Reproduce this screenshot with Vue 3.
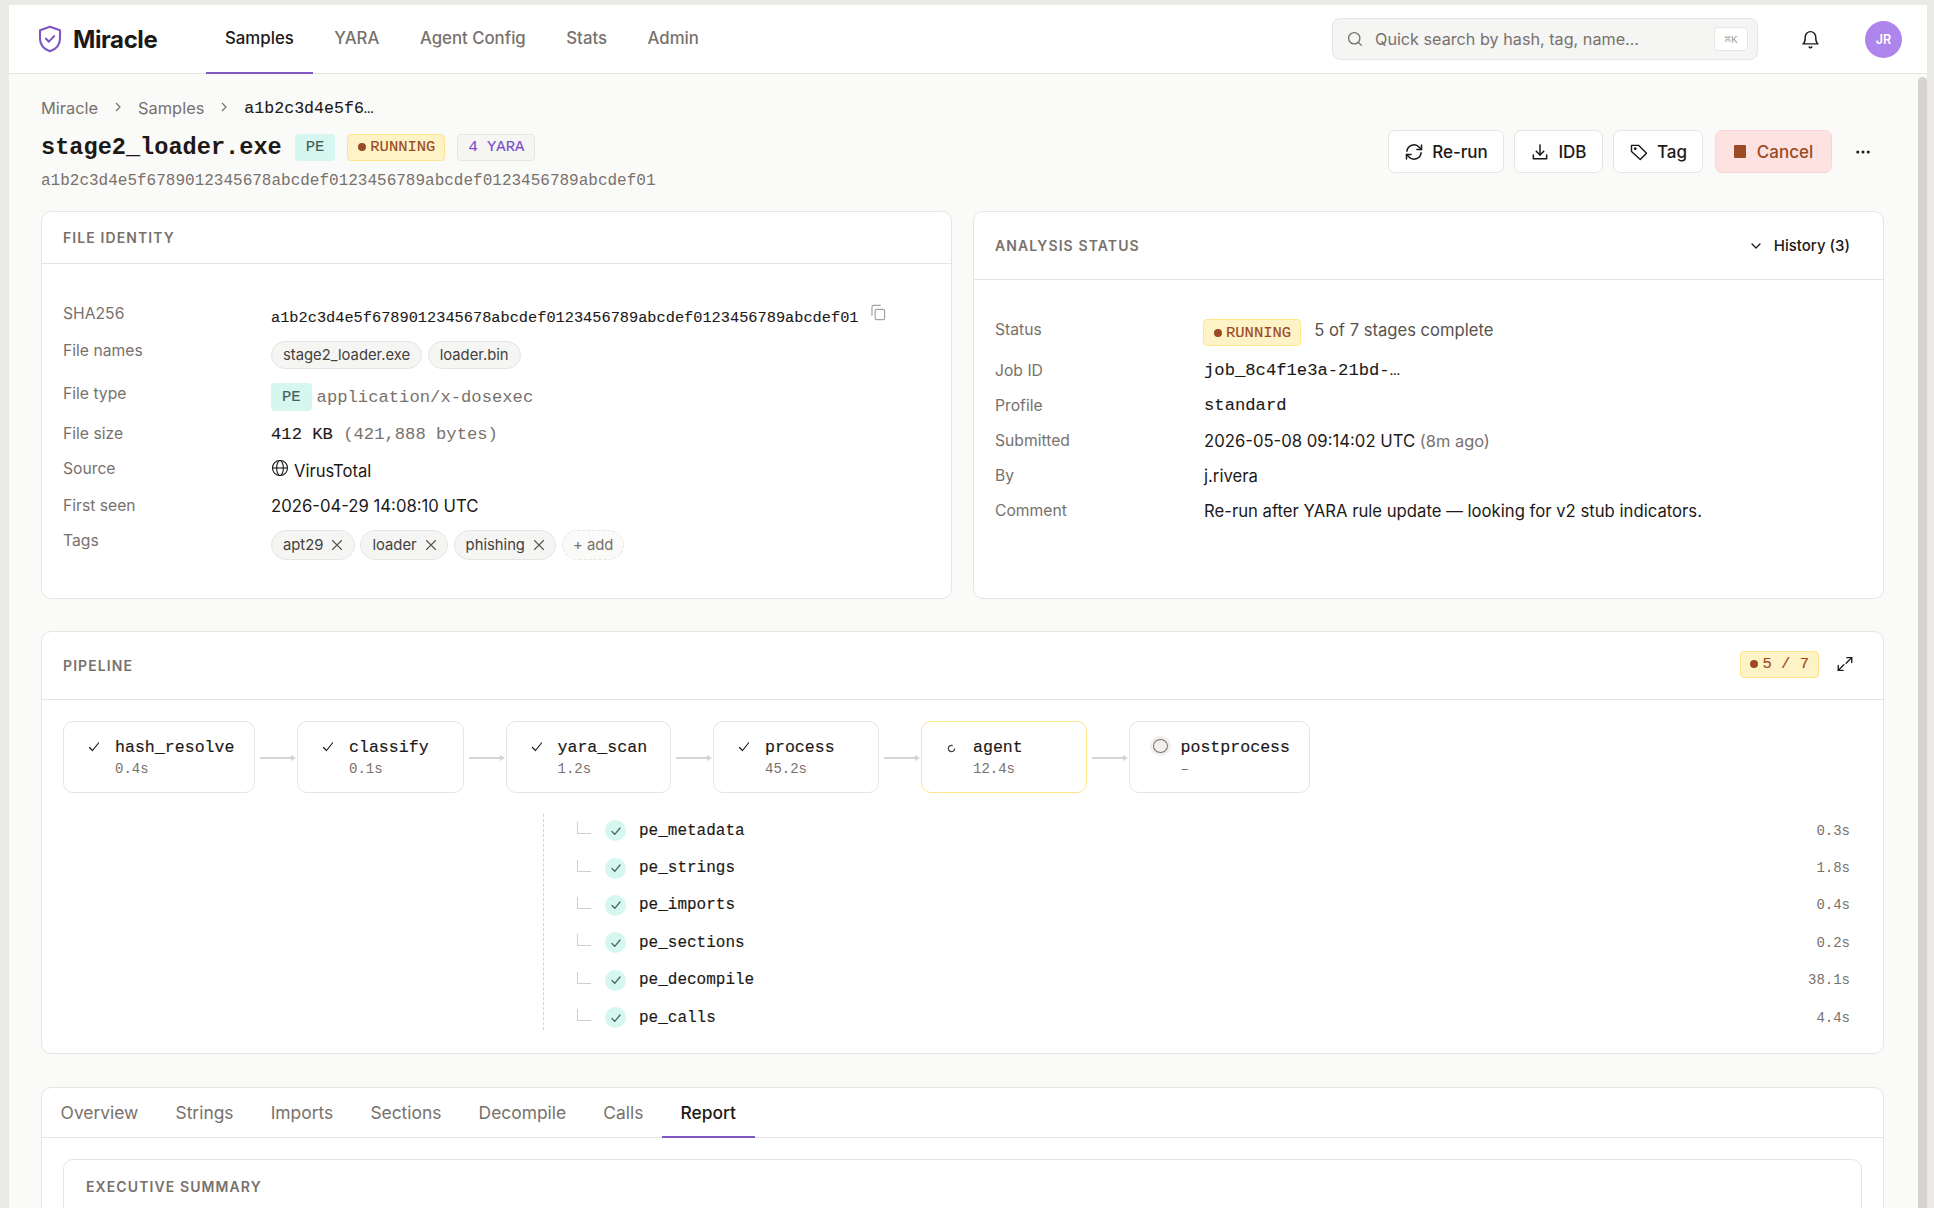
<script setup>
const navItems = ['Samples', 'YARA', 'Agent Config', 'Stats', 'Admin'];
const stages = [
  { name: 'hash_resolve', time: '0.4s', state: 'done', width: '192px' },
  { name: 'classify', time: '0.1s', state: 'done', width: '166.500px' },
  { name: 'yara_scan', time: '1.2s', state: 'done', width: '165.500px' },
  { name: 'process', time: '45.2s', state: 'done', width: '166px' },
  { name: 'agent', time: '12.4s', state: 'running', width: '166px' },
  { name: 'postprocess', time: '–', state: 'pending', width: '181px' },
];
const subStages = [
  { name: 'pe_metadata', time: '0.3s' },
  { name: 'pe_strings', time: '1.8s' },
  { name: 'pe_imports', time: '0.4s' },
  { name: 'pe_sections', time: '0.2s' },
  { name: 'pe_decompile', time: '38.1s' },
  { name: 'pe_calls', time: '4.4s' },
];
const tags = ['apt29', 'loader', 'phishing'];
const tabs = ['Overview', 'Strings', 'Imports', 'Sections', 'Decompile', 'Calls', 'Report'];
</script>

<template>
  <div class="window">
    <header class="topbar">
      <div class="brand">
        <svg class="brand-icon" viewBox="0 0 24 24" fill="none" stroke="#7e57c2" stroke-width="1.700" stroke-linecap="round" stroke-linejoin="round">
          <path d="M12 2.2 4 5v6.500c0 5 3.400 8.600 8 10.300 4.600-1.700 8-5.300 8-10.300V5z" />
          <path d="m8.800 11.800 2.300 2.300 4.200-4.400" />
        </svg>
        <span class="brand-name">Miracle</span>
      </div>
      <nav class="nav">
        <a v-for="item in navItems" :key="item" class="nav-item" :class="{ active: item === 'Samples' }">{{ item }}</a>
      </nav>
      <div class="search">
        <svg class="search-icon" viewBox="0 0 24 24" fill="none" stroke="#78716c" stroke-width="1.800" stroke-linecap="round">
          <circle cx="11" cy="11" r="7.500" />
          <path d="m20.500 20.500-4.200-4.200" />
        </svg>
        <span class="search-text">Quick search by hash, tag, name…</span>
        <kbd class="search-kbd">⌘K</kbd>
      </div>
      <svg class="bell" viewBox="0 0 24 24" fill="none" stroke="#1c1917" stroke-width="1.700" stroke-linecap="round" stroke-linejoin="round">
        <path d="M6 9a6 6 0 0 1 12 0c0 6 2.500 8 2.500 8h-17S6 15 6 9" />
        <path d="M10.500 20.500a1.700 1.700 0 0 0 3 0" />
      </svg>
      <div class="avatar">JR</div>
    </header>

    <div class="scroll-area">
      <main class="page">
        <div class="crumbs">
          <span>Miracle</span>
          <svg class="crumb-sep" viewBox="0 0 12 12" fill="none" stroke="#78716c" stroke-width="1.200"><path d="m4 2 4 4-4 4" /></svg>
          <span>Samples</span>
          <svg class="crumb-sep" viewBox="0 0 12 12" fill="none" stroke="#78716c" stroke-width="1.200"><path d="m4 2 4 4-4 4" /></svg>
          <span class="crumb-current">a1b2c3d4e5f6…</span>
        </div>

        <div class="title-row">
          <div class="title-left">
            <div class="title-line">
              <h1 class="title">stage2_loader.exe</h1>
              <span class="badge badge-pe">PE</span>
              <span class="badge badge-running"><i class="dot"></i>RUNNING</span>
              <span class="badge badge-yara">4 YARA</span>
            </div>
            <div class="title-hash">a1b2c3d4e5f6789012345678abcdef0123456789abcdef0123456789abcdef01</div>
          </div>
          <div class="actions">
            <button class="btn btn-rerun">
              <svg class="btn-icon" viewBox="0 0 24 24" fill="none" stroke="currentColor" stroke-width="1.800" stroke-linecap="round" stroke-linejoin="round">
                <path d="M3.500 11a8.500 8.500 0 0 1 14.800-4.700L21 9" /><path d="M21 3.500V9h-5.500" />
                <path d="M20.500 13a8.500 8.500 0 0 1-14.800 4.700L3 15" /><path d="M3 20.500V15h5.500" />
              </svg>
              Re-run
            </button>
            <button class="btn btn-idb">
              <svg class="btn-icon" viewBox="0 0 24 24" fill="none" stroke="currentColor" stroke-width="1.800" stroke-linecap="round" stroke-linejoin="round">
                <path d="M12 3.500v12" /><path d="m7.500 11 4.500 4.500 4.500-4.500" /><path d="M4 15.500V20h16v-4.500" />
              </svg>
              IDB
            </button>
            <button class="btn btn-tag">
              <svg class="btn-icon" viewBox="0 0 24 24" fill="none" stroke="currentColor" stroke-width="1.700" stroke-linecap="round" stroke-linejoin="round">
                <path d="M3 4h8.500L21 13.500 13.500 21 3 11.500z" /><circle cx="7.500" cy="8" r="0.800" />
              </svg>
              Tag
            </button>
            <button class="btn btn-cancel"><i class="stop"></i>Cancel</button>
            <svg class="more" viewBox="0 0 24 24" fill="#1c1917"><circle cx="5" cy="12" r="2" /><circle cx="12" cy="12" r="2" /><circle cx="19" cy="12" r="2" /></svg>
          </div>
        </div>

        <div class="info-grid">
          <section class="card">
            <div class="card-head head-short"><h2 class="card-title">FILE IDENTITY</h2></div>
            <div class="identity">
              <div class="label">SHA256</div>
              <div class="value row-sha">
                <span class="mono sha">a1b2c3d4e5f6789012345678abcdef0123456789abcdef0123456789abcdef01</span>
                <svg class="copy" viewBox="0 0 24 24" fill="none" stroke="#a8a29e" stroke-width="1.500" stroke-linejoin="round">
                  <rect x="9" y="8" width="12" height="13" rx="2" /><path d="M5 16V5a2 2 0 0 1 2-2h9" />
                </svg>
              </div>
              <div class="label">File names</div>
              <div class="value row-names">
                <span class="chip">stage2_loader.exe</span>
                <span class="chip">loader.bin</span>
              </div>
              <div class="label">File type</div>
              <div class="value row-type">
                <span class="badge badge-pe">PE</span>
                <span class="mono muted">application/x-dosexec</span>
              </div>
              <div class="label">File size</div>
              <div class="value row-size mono"><span>412 KB</span>&nbsp;<span class="muted">(421,888 bytes)</span></div>
              <div class="label">Source</div>
              <div class="value row-source">
                <svg class="globe" viewBox="0 0 24 24" fill="none" stroke="#1c1917" stroke-width="1.500">
                  <circle cx="12" cy="12" r="10" /><ellipse cx="12" cy="12" rx="4.500" ry="10" /><path d="M2 12h20" />
                </svg>
                VirusTotal
              </div>
              <div class="label">First seen</div>
              <div class="value row-seen">2026-04-29 14:08:10 UTC</div>
              <div class="label">Tags</div>
              <div class="value row-tags">
                <span v-for="tag in tags" :key="tag" class="chip chip-tag">
                  {{ tag }}
                  <svg class="chip-x" viewBox="0 0 12 12" fill="none" stroke="#57534e" stroke-width="1.100" stroke-linecap="round"><path d="m1.500 1.500 9 9M10.500 1.500l-9 9" /></svg>
                </span>
                <span class="chip chip-add">+ add</span>
              </div>
            </div>
          </section>

          <section class="card">
            <div class="card-head head-tall">
              <h2 class="card-title">ANALYSIS STATUS</h2>
              <div class="history">
                <svg class="history-icon" viewBox="0 0 12 12" fill="none" stroke="#1c1917" stroke-width="1.300" stroke-linecap="round" stroke-linejoin="round"><path d="m2 4 4 4 4-4" /></svg>
                History (3)
              </div>
            </div>
            <div class="status">
              <div class="label">Status</div>
              <div class="value status-row">
                <span class="badge badge-running"><i class="dot"></i>RUNNING</span>
                <span class="stages-done">5 of 7 stages complete</span>
              </div>
              <div class="label">Job ID</div>
              <div class="value mono">job_8c4f1e3a-21bd-…</div>
              <div class="label">Profile</div>
              <div class="value mono">standard</div>
              <div class="label">Submitted</div>
              <div class="value">2026-05-08 09:14:02 UTC <span class="ago">(8m ago)</span></div>
              <div class="label">By</div>
              <div class="value">j.rivera</div>
              <div class="label">Comment</div>
              <div class="value">Re-run after YARA rule update — looking for v2 stub indicators.</div>
            </div>
          </section>
        </div>

        <section class="card pipeline">
          <div class="card-head head-pipeline">
            <h2 class="card-title">PIPELINE</h2>
            <div class="pipeline-tools">
              <span class="badge badge-running badge-count"><i class="dot"></i>5 / 7</span>
              <svg class="expand" viewBox="0 0 24 24" fill="none" stroke="#1c1917" stroke-width="1.800" stroke-linecap="round" stroke-linejoin="round">
                <path d="M14.500 3.500H21V10" /><path d="M21 3.500 13.500 11" /><path d="M9.500 20.500H3V14" /><path d="M3 20.500 10.500 13" />
              </svg>
            </div>
          </div>
          <div class="flow">
            <template v-for="(stage, i) in stages" :key="stage.name">
              <div class="node" :class="stage.state" :style="{ width: stage.width }">
                <span class="node-mark">
                  <svg v-if="stage.state === 'done'" class="node-check" viewBox="0 0 12 12" fill="none" stroke="#1c1917" stroke-width="1.200" stroke-linecap="round" stroke-linejoin="round"><path d="m1.500 6.500 3 3 6-7.500" /></svg>
                  <svg v-else-if="stage.state === 'running'" class="node-spin" viewBox="0 0 12 12" fill="none" stroke="#44403c" stroke-width="1.700"><circle cx="6" cy="6" r="4.200" stroke-dasharray="21 5.400" /></svg>
                  <span v-else class="node-idle"></span>
                </span>
                <div class="node-text">
                  <div class="node-name">{{ stage.name }}</div>
                  <div class="node-time">{{ stage.time }}</div>
                </div>
              </div>
              <svg v-if="i < stages.length - 1" class="arrow" viewBox="0 0 42 10" fill="#d6d3d1"><path d="M5 4h31v2H5z" /><path d="m36 2 5 3-5 3z" /></svg>
            </template>
          </div>
          <div class="subs">
            <div v-for="sub in subStages" :key="sub.name" class="sub">
              <span class="elbow"></span>
              <span class="sub-mark">
                <svg viewBox="0 0 12 12" fill="none" stroke="#44605a" stroke-width="1.200" stroke-linecap="round" stroke-linejoin="round"><path d="m2 6.500 2.800 2.800L10 3" /></svg>
              </span>
              <span class="sub-name">{{ sub.name }}</span>
              <span class="sub-time">{{ sub.time }}</span>
            </div>
          </div>
        </section>

        <section class="card report">
          <div class="tabs">
            <a v-for="tab in tabs" :key="tab" class="tab" :class="{ active: tab === 'Report' }">{{ tab }}</a>
          </div>
          <div class="report-body">
            <div class="summary">
              <h2 class="card-title">EXECUTIVE SUMMARY</h2>
            </div>
          </div>
        </section>
      </main>
      <div class="scroll-track"><div class="scroll-thumb"></div></div>
    </div>
  </div>
</template>

<style>
html, body {
  margin: 0;
  height: 1208px;
  overflow: hidden;
  background: #e9e9e6;
}
</style>

<style scoped>
.window {
  margin: 5px 7px 0 9px;
  height: 1203px;
  display: flex;
  flex-direction: column;
  background: #fafaf9;
  font-family: Inter, sans-serif;
  color: #1c1917;
  overflow: hidden;
}

.topbar {
  flex: none;
  height: 69px;
  box-sizing: border-box;
  background: #fff;
  border-bottom: 1px solid #e7e5e4;
  display: flex;
  align-items: center;
  padding-left: 26px;
}

.brand {
  display: flex;
  align-items: center;
  gap: 8px;
  width: 171px;
}

.brand-icon {
  width: 30px;
  height: 30px;
}

.brand-name {
  font-size: 24px;
  font-weight: 700;
  letter-spacing: -0.4px;
}

.nav {
  display: flex;
  align-self: stretch;
}

.nav-item {
  display: flex;
  align-items: center;
  padding: 0 19px 2px;
  margin-right: 2.500px;
  margin-bottom: -1px;
  font-size: 16.800px;
  color: #78716c;
  font-weight: 500;
  border-bottom: 2px solid transparent;
  box-sizing: border-box;
}

.nav-item.active {
  color: #1c1917;
  border-bottom-color: #7e57c2;
}

.search {
  margin-left: auto;
  width: 426px;
  height: 42px;
  box-sizing: border-box;
  background: #f5f5f4;
  border: 1px solid #e7e5e4;
  border-radius: 8px;
  display: flex;
  align-items: center;
  padding: 0 9px 0 13px;
}

.search-icon {
  width: 18px;
  height: 18px;
  margin-right: 11px;
}

.search-text {
  flex: 1;
  font-size: 16.200px;
  color: #78716c;
}

.search-kbd {
  width: 32px;
  height: 22px;
  background: #fff;
  border: 1px solid #e7e5e4;
  border-radius: 4px;
  font-family: "Liberation Mono", monospace;
  font-size: 11px;
  color: #a8a29e;
  display: flex;
  align-items: center;
  justify-content: center;
}

.bell {
  width: 21px;
  height: 21px;
  margin-left: 42px;
}

.avatar {
  width: 37px;
  height: 37px;
  margin-left: 44px;
  margin-right: 25px;
  border-radius: 50%;
  background: #ae85ec;
  color: #fff;
  font-size: 12.500px;
  font-weight: 600;
  display: flex;
  align-items: center;
  justify-content: center;
}

.scroll-area {
  flex: 1;
  min-height: 0;
  display: flex;
  overflow: hidden;
}

.page {
  flex: 1;
  min-width: 0;
  padding: 22px 34px 0 32px;
}

.scroll-track {
  flex: none;
  width: 9px;
  padding-top: 3px;
}

.scroll-thumb {
  height: 1200px;
  background: #d6d3d1;
  border-radius: 5px;
}

.crumbs {
  display: flex;
  align-items: center;
  height: 24px;
  font-size: 16.400px;
  color: #78716c;
}

.crumb-sep {
  width: 12px;
  height: 12px;
  margin: -3px 14px 0 14px;
}

.crumb-current {
  font-family: "Liberation Mono", monospace;
  color: #1c1917;
  font-size: 16.600px;
  -webkit-text-stroke: 0.1px;
}

.title-row {
  display: flex;
  justify-content: space-between;
  margin-top: 13px;
}

.title-line {
  display: flex;
  align-items: center;
  height: 30px;
}

.title {
  margin: 0 13px 0 0;
  font-family: "Liberation Mono", monospace;
  font-size: 23.600px;
  font-weight: 700;
  line-height: 30px;
}

.title-hash {
  margin-top: 8px;
  font-family: "Liberation Mono", monospace;
  font-size: 16px;
  line-height: 20px;
  color: #78716c;
}

.badge {
  display: inline-flex;
  align-items: center;
  box-sizing: border-box;
  height: 27px;
  padding: 0 10px;
  border: 1px solid transparent;
  border-radius: 4px;
  font-family: "Liberation Mono", monospace;
  font-size: 15.500px;
  white-space: nowrap;
  -webkit-text-stroke: 0.15px;
  margin-top: -2px;
}

.badge-pe {
  background: #d5f7ef;
  color: #44605a;
  margin-right: 12px;
}

.badge-running {
  background: #fef3c7;
  border-color: #fde68a;
  color: #9a4a24;
  margin-right: 12px;
  padding: 0 9px 0 10px;
}

.badge-yara {
  background: #f5f5f4;
  border-color: #e7e5e4;
  color: #7e4fc9;
}

.dot {
  width: 8px;
  height: 8px;
  border-radius: 50%;
  background: #9a4a24;
  margin-right: 4px;
}

.actions {
  display: flex;
  align-items: center;
  align-self: flex-start;
  margin-top: -3px;
  margin-right: 12px;
}

.btn {
  display: flex;
  align-items: center;
  justify-content: center;
  box-sizing: border-box;
  height: 43px;
  margin-right: 10px;
  background: #fff;
  border: 1px solid #e7e5e4;
  border-radius: 7px;
  font-family: Inter, sans-serif;
  font-size: 17px;
  font-weight: 500;
  color: #1c1917;
}

.btn-rerun { width: 116px; }
.btn-idb { width: 89px; }
.btn-tag { width: 90px; margin-right: 12px; }

.btn-icon {
  width: 20px;
  height: 20px;
  margin-right: 8px;
}

.btn-cancel {
  width: 117px;
  background: #fee2e2;
  border-color: #fbd5d5;
  color: #9a4a24;
  margin-right: 22px;
}

.stop {
  width: 12px;
  height: 13px;
  background: #9a4a24;
  border-radius: 1px;
  margin-right: 11px;
}

.more {
  width: 18px;
  height: 18px;
}

.info-grid {
  display: grid;
  grid-template-columns: 1fr 1fr;
  gap: 21px;
  margin-top: 20px;
}

.card {
  background: #fff;
  border: 1px solid #e7e5e4;
  border-radius: 10px;
}

.card-head {
  display: flex;
  align-items: center;
  justify-content: space-between;
  box-sizing: border-box;
  padding: 0 21px;
  border-bottom: 1px solid #e7e5e4;
}

.head-short { height: 52px; }
.head-tall { height: 68px; padding-right: 33px; }
.head-pipeline { height: 68px; padding-right: 29px; }

.card-title {
  margin: 0;
  font-size: 14px;
  font-weight: 600;
  letter-spacing: 1.100px;
  color: #78716c;
}

.identity {
  display: grid;
  grid-template-columns: 208px 1fr;
  row-gap: 10px;
  padding: 39px 21px 37px;
}

.label {
  font-size: 15.700px;
  line-height: 20px;
  color: #78716c;
}

.identity .label {
  padding-top: 1px;
}

.value {
  font-size: 16.700px;
  color: #1c1917;
  min-width: 0;
}

.mono {
  font-family: "Liberation Mono", monospace;
  -webkit-text-stroke: 0.1px;
}

.mono.muted,
.mono .muted {
  color: #78716c;
  -webkit-text-stroke: 0;
}

.row-sha {
  display: flex;
  height: 27px;
  align-items: center;
}

.sha {
  font-size: 15.300px;
  padding-top: 2px;
}

.copy {
  width: 19px;
  height: 19px;
  margin: -8px 0 0 9px;
}

.row-names,
.row-tags {
  display: flex;
  gap: 5.500px;
}

.row-names { height: 33px; }
.row-tags { height: 31px; }

.chip {
  display: inline-flex;
  align-items: center;
  box-sizing: border-box;
  height: 28px;
  padding: 0 11px;
  background: #f5f5f4;
  border: 1px solid #e7e5e4;
  border-radius: 14px;
  font-size: 14.800px;
  color: #44403c;
}

.row-names .chip {
  margin-top: 1px;
}

.chip-tag {
  height: 30px;
  border-radius: 15px;
  gap: 8px;
  padding: 0 10.500px 0 11px;
}

.chip-x {
  width: 12px;
  height: 12px;
}

.chip-add {
  height: 30px;
  border-radius: 15px;
  padding: 0 10px;
  background: #fafaf9;
  border-style: dashed;
  color: #78716c;
}

.row-type {
  display: flex;
  align-items: center;
  height: 30px;
  padding-bottom: 2px;
  box-sizing: border-box;
  font-size: 17.200px;
}

.row-type .badge-pe {
  margin: 0 5px 0 0;
  height: 28px;
}

.row-size {
  height: 25px;
  line-height: 24px;
  font-size: 17.200px;
}

.row-source {
  display: flex;
  height: 27px;
  line-height: 26px;
  gap: 5px;
  font-size: 16.600px;
}

.globe {
  width: 18px;
  height: 18px;
  margin-top: 1px;
}

.row-seen {
  height: 25px;
  line-height: 22px;
}

.status {
  display: grid;
  grid-template-columns: 209px 1fr;
  grid-template-rows: 41px repeat(5, 35px);
  padding: 39px 21px 0;
}

.status .label {
  padding-top: 1px;
}

.status .value {
  line-height: 22px;
}

.status .value.mono {
  font-size: 17.200px;
}

.status-row {
  display: flex;
  align-items: flex-start;
}

.status-row .badge-running {
  margin: 0 13px 0 -1px;
}

.stages-done {
  color: #57534e;
  font-size: 16.600px;
}

.ago {
  color: #78716c;
  font-size: 16.400px;
}

.history {
  display: flex;
  align-items: center;
  font-size: 15px;
  font-weight: 500;
}

.history-icon {
  width: 12px;
  height: 12px;
  margin-right: 12px;
}

.pipeline {
  margin-top: 32px;
  padding-bottom: 23px;
}

.pipeline-tools {
  display: flex;
  align-items: center;
  margin-top: -3px;
}

.badge-count {
  margin: 0 17px 0 0;
  height: 27px;
  padding: 0 9px;
}

.expand {
  width: 18px;
  height: 18px;
}

.flow {
  display: flex;
  align-items: center;
  padding: 21px 21px 0;
}

.arrow {
  flex: none;
  width: 42px;
  height: 10px;
  margin-top: 2px;
}

.node {
  flex: none;
  box-sizing: border-box;
  height: 72px;
  display: flex;
  background: #fff;
  border: 1px solid #e7e5e4;
  border-radius: 10px;
  padding: 14px 0 0 24px;
}

.node.running {
  border-color: #fde68a;
}

.node.pending {
  padding-left: 20px;
}

.node-mark {
  width: 27px;
  flex: none;
}

.node-check {
  width: 12px;
  height: 12px;
  margin-top: 5px;
  display: block;
}

.node-spin {
  width: 9px;
  height: 9px;
  margin-top: 8px;
  margin-left: 1px;
  display: block;
}

.node.pending .node-mark {
  width: 30.500px;
}

.node-idle {
  display: block;
  width: 21px;
  height: 20px;
  margin-top: 0;
  border-radius: 50%;
  background: #f0efed;
  position: relative;
}

.node-idle::after {
  content: "";
  position: absolute;
  inset: 3px;
  border: 1.500px solid #78716c;
  border-radius: 50%;
}

.node-name {
  font-family: "Liberation Mono", monospace;
  font-size: 16.600px;
  line-height: 24px;
  color: #1c1917;
  -webkit-text-stroke: 0.15px;
}

.node-time {
  font-family: "Liberation Mono", monospace;
  font-size: 14px;
  line-height: 18px;
  color: #78716c;
}

.subs {
  display: flow-root;
  margin: 21px 0 0 501px;
  padding: 0 33px;
  border-left: 1px dashed #d6d3d1;
}

.sub {
  display: flex;
  align-items: center;
  height: 37.400px;
}

.sub:first-child { margin-top: -2px; }
.sub:last-child { margin-bottom: -6px; }

.elbow {
  width: 14px;
  height: 12px;
  margin: -5px 14px 0 0;
  box-sizing: border-box;
  border-left: 1px solid #d0cdca;
  border-bottom: 1px solid #d0cdca;
}

.sub-mark {
  width: 21px;
  height: 21px;
  border-radius: 50%;
  background: #d5f7ef;
  display: flex;
  align-items: center;
  justify-content: center;
  margin-right: 13px;
}

.sub-mark svg {
  width: 12px;
  height: 12px;
}

.sub-name {
  flex: 1;
  font-family: "Liberation Mono", monospace;
  font-size: 16px;
  color: #1c1917;
  -webkit-text-stroke: 0.15px;
}

.sub-time {
  font-family: "Liberation Mono", monospace;
  font-size: 14px;
  color: #78716c;
}

.report {
  margin-top: 33px;
}

.tabs {
  display: flex;
  height: 50px;
  box-sizing: border-box;
  border-bottom: 1px solid #e7e5e4;
}

.tab {
  display: flex;
  align-items: center;
  padding: 0 18.600px;
  font-size: 17.400px;
  color: #78716c;
  margin-bottom: -1px;
  border-bottom: 2px solid transparent;
}

.tab.active {
  color: #1c1917;
  font-weight: 500;
  border-bottom-color: #7e57c2;
}

.report-body {
  padding: 21px 21px 0;
}

.summary {
  height: 300px;
  padding: 18px 22px;
  box-sizing: border-box;
  border: 1px solid #e7e5e4;
  border-radius: 10px;
}
</style>
